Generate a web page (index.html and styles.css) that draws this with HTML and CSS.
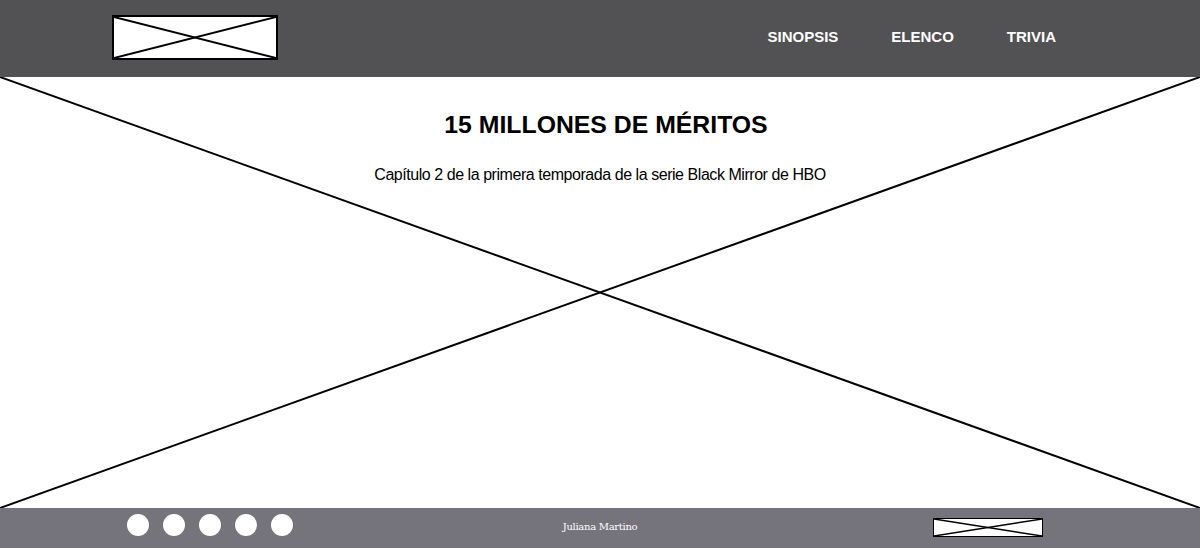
FILE: index.html
```html
<!DOCTYPE html>
<html lang="es">
<head>
    <meta charset="UTF-8">
    <meta name="viewport" content="width=device-width, initial-scale=1.0">
    <title>15 Millones de Méritos</title>
    <link rel="stylesheet" href="styles.css">
</head>
<body>
    <header class="top-bar">
        <div class="logo placeholder">
            <svg viewBox="0 0 100 100" preserveAspectRatio="none">
                <line x1="0" y1="0" x2="100" y2="100" vector-effect="non-scaling-stroke"/>
                <line x1="0" y1="100" x2="100" y2="0" vector-effect="non-scaling-stroke"/>
            </svg>
        </div>
        <nav class="menu">
            <a href="#">SINOPSIS</a>
            <a href="#">ELENCO</a>
            <a href="#">TRIVIA</a>
        </nav>
    </header>

    <main class="hero">
        <svg class="hero-bg" viewBox="0 0 100 100" preserveAspectRatio="none">
            <line x1="0" y1="0" x2="100" y2="100" vector-effect="non-scaling-stroke"/>
            <line x1="0" y1="100" x2="100" y2="0" vector-effect="non-scaling-stroke"/>
        </svg>
        <h1>15 MILLONES DE MÉRITOS</h1>
        <p>Capítulo 2 de la primera temporada de la serie Black Mirror de HBO</p>
    </main>

    <footer class="bottom-bar">
        <div class="social">
            <span class="dot"></span>
            <span class="dot"></span>
            <span class="dot"></span>
            <span class="dot"></span>
            <span class="dot"></span>
        </div>
        <div class="author">Juliana Martino</div>
        <div class="footer-logo">
            <svg viewBox="0 0 100 100" preserveAspectRatio="none">
                <line x1="0" y1="0" x2="100" y2="100" vector-effect="non-scaling-stroke"/>
                <line x1="0" y1="100" x2="100" y2="0" vector-effect="non-scaling-stroke"/>
            </svg>
        </div>
    </footer>
</body>
</html>
```

FILE: styles.css
```css
body {
    margin: 0;
    font-family: "Liberation Sans", Arial, sans-serif;
    background: white;
}
svg line {
    stroke: black;
    stroke-width: 2;
}
.placeholder {
    background: white;
    border: 2px solid black;
    box-sizing: border-box;
}
.placeholder svg {
    display: block;
    width: 100%;
    height: 100%;
}
.top-bar {
    height: 77px;
    background: #525254;
    display: flex;
    align-items: center;
    justify-content: space-between;
    padding: 0 144px 0 112px;
}
.logo {
    width: 166px;
    height: 45px;
    margin-top: -3px;
}
.menu {
    display: flex;
    gap: 53px;
}
.menu a {
    color: white;
    text-decoration: none;
    font-weight: bold;
    font-size: 15px;
    margin-top: -4px;
}
.hero {
    position: relative;
    height: 431px;
    text-align: center;
    padding-top: 1px;
    box-sizing: border-box;
}
.hero-bg {
    position: absolute;
    top: 0;
    left: 0;
    width: 100%;
    height: 100%;
}
.hero h1 {
    position: relative;
    margin: 31px 0 0;
    padding-left: 12px;
    font-size: 24.8px;
    line-height: 32px;
}
.hero p {
    position: relative;
    margin: 23px 0 0;
    font-size: 16px;
    letter-spacing: -0.45px;
    line-height: 22px;
}
.bottom-bar {
    height: 40px;
    background: #75747c;
    display: grid;
    grid-template-columns: 1fr 1fr 1fr;
    align-items: center;
    padding: 0 157px 0 127px;
}
.social {
    display: flex;
    gap: 14px;
    margin-top: -6px;
}
.dot {
    width: 22px;
    height: 22px;
    border-radius: 50%;
    background: white;
}
.author {
    color: white;
    font-family: "DejaVu Serif", serif;
    font-size: 10px;
    letter-spacing: -0.3px;
    text-align: center;
    margin: -3px 0 0 30px;
}
.footer-logo {
    display: flex;
    justify-content: flex-end;
}
.footer-logo svg {
    width: 110px;
    height: 19px;
    background: white;
    border: 1.5px solid black;
    box-sizing: border-box;
    margin-top: -2px;
}
.footer-logo svg line {
    stroke-width: 1.5;
}
```
